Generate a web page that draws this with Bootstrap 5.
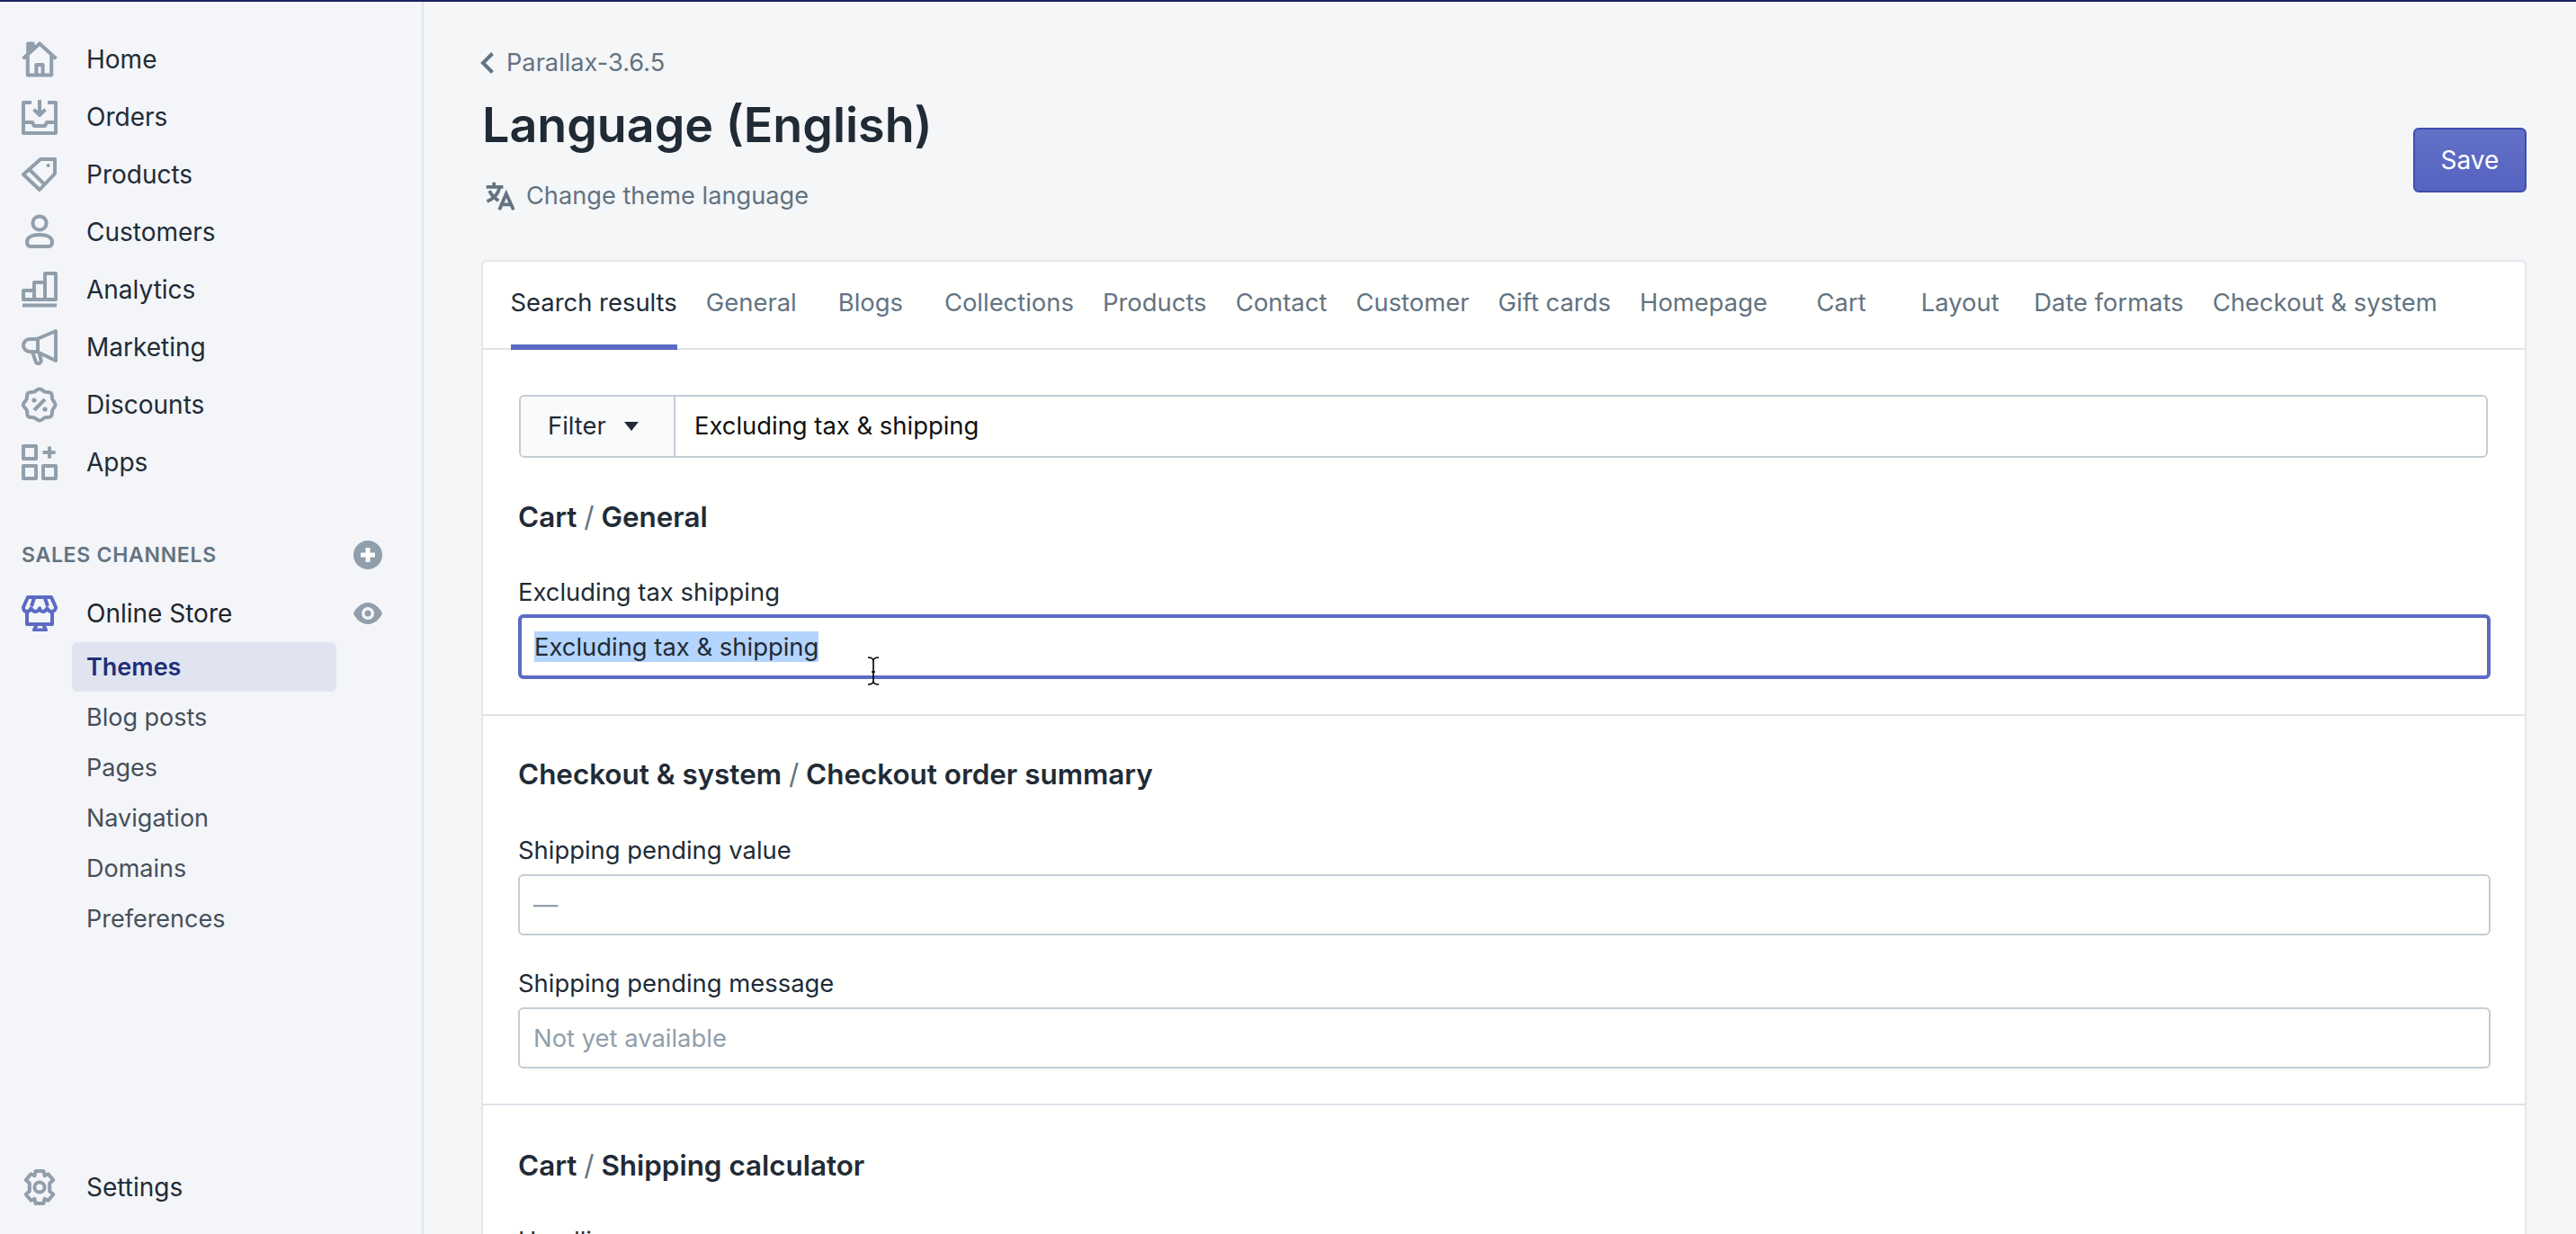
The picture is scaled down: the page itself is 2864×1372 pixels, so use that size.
<!DOCTYPE html>
<html lang="en">
<head>
<meta charset="utf-8">
<title>Language (English)</title>
<link href="https://cdn.jsdelivr.net/npm/bootstrap@5.3.0/dist/css/bootstrap.min.css" rel="stylesheet">
<style>
html,body{height:1372px;overflow:hidden}
body{font-family:"Inter","Liberation Sans",sans-serif;background:#f4f6f8;color:#212b36;font-size:27.4px;letter-spacing:0}
a{text-decoration:none}
.topline{height:2px;background:#1c2260}
.shell{height:1370px;overflow:hidden}
.sidebar{width:471px;flex:none;background:#f3f5f8;border-right:2px solid #e1e4ea;padding:32px 0 20px}
.navrow{flex:none;height:64px;padding-left:24px;color:#212b36;font-size:28px}
.navrow svg.ico{width:40px;height:40px;flex:none;margin-right:32px}
.ico *{fill:none;stroke:#919eab;stroke-width:2;stroke-linejoin:round}
.ico .solid{fill:#919eab;stroke:none}
.storeico *{stroke:#5c6ac4}
.channels{flex:none;height:32px;margin-top:55px;padding:0 44px 0 24px;font-size:23px;font-weight:600;color:#637381;letter-spacing:.72px;line-height:32px}
.rowstore{margin-top:19px;height:60px}
.sideact{width:32px;height:32px;margin-left:auto;margin-right:44px}
.subitem{flex:none;height:56px;margin-left:80px;width:294px;padding-left:16px;color:#454f5b;font-size:27px;line-height:56px;border-radius:6px;display:block}
.subactive{background:#e0e4f0;color:#202e78;font-weight:600;height:55px;line-height:55px;margin-bottom:1px;margin-top:2px}
.pagearea{padding:48px 55px 0 64px;min-width:0}
.crumb{height:40px;color:#637381;font-size:27.2px}
.crumb svg{width:15px;height:24px;margin-right:14px;margin-left:-1px;flex:none}
.pgtitle{font-size:53.8px;font-weight:600;line-height:64px;margin:17px 0 0 1px;color:#212b36}
.langlink{height:40px;margin:27px 0 0 4px;color:#637381;font-size:27.2px}
.langlink svg{width:34px;height:34px;margin-right:12px}
.savebtn{width:126px;height:72px;margin-top:92px;background:linear-gradient(#6371c7,#5563c1);border:2px solid #3f4eae;color:#fff;font-size:28px;border-radius:6px;padding:0;box-shadow:none}
.mainpanel{margin-top:51px;border:2px solid #e3e6ea;border-radius:6px;background:#fffffe;box-shadow:none}
.tabbar{height:98px;padding:25px 0 0 14px;border-bottom:2px solid #dfe3e8;flex-wrap:nowrap}
.tabcell{padding:0 16.06px;color:#637381;text-align:center}
.tabcell:first-child{padding-left:16.5px}
.tabtxt{display:block;min-width:100px;height:73px;line-height:40px;white-space:nowrap;font-size:27.4px}
.tabon{color:#212b36;border-bottom:6px solid #5c6ac4}
.segment{padding:45px 39px 39px;border-bottom:2px solid #dfe3e8}
.firstseg{padding-top:50px}
.filterbox{width:2189px;height:70px;margin-left:1px;border:2px solid #c4cdd5;border-radius:6px;margin-bottom:46px}
.filterbtn{width:172px;background:#f9fafb;border-right:2px solid #c4cdd5;padding-left:30px;color:#212b36;border-radius:6px 0 0 6px}
.filterbtn svg{width:16px;height:10px;margin-left:20px}
.filtertxt{padding-left:21px;color:#111}
.seghead{font-size:31.4px;font-weight:600;line-height:40px;color:#212b36;margin:0}
.seghead i{font-style:normal;font-weight:400;color:#637381}
.fldlabel{line-height:38px;margin-top:44px;margin-bottom:8px;color:#212b36;display:block}
.fldlabel1{margin-top:45px}
.fldlabel2{margin-top:34px}
.fldbox.form-control{height:68px;width:2193px;border:2px solid #c4cdd5;border-radius:6px;padding:0 15px;font-size:27.4px;line-height:64px;color:#919eab;background:#fffffe}
.fldfocus.form-control{height:72px;border:4px solid #5c6ac4;color:#212b36;margin-top:-2px;padding:0 14px}
.picked{background:#b3d4fc;display:inline-block;line-height:34px}
.ibeam{position:absolute;left:964px;top:730px;width:14px;height:32px}
.lastseg{border-bottom:0;padding-top:47px}
</style>
</head>
<body>
<div class="topline"></div>
<div class="shell d-flex">
  <aside class="sidebar d-flex flex-column">
    <a class="navrow d-flex align-items-center"><svg class="ico" viewBox="0 0 20 20"><path d="M.8 9.600 10 1.200l9.200 8.400M3.400 7.500V18.800h13.200V7.500M3.600 7V1.300h3.600M3.600 4.800 7 1.500M8.200 18.800V13h3.600v5.800"/></svg>Home</a>
    <a class="navrow d-flex align-items-center"><svg class="ico" viewBox="0 0 20 20"><path d="M5.500 2H1v17h18V2h-4.500M1 13h5l1 2h6l1-2h5M10 .5V8.500M6.800 5.800 10 9l3.200-3.200"/></svg>Orders</a>
    <a class="navrow d-flex align-items-center"><svg class="ico" viewBox="0 0 20 20"><path d="M10.500 1.500H18.500V9.500L10 18.500 1 10ZM4.600 7.500 12.800 15.600"/><circle class="solid" cx="14.800" cy="5" r="1"/></svg>Products</a>
    <a class="navrow d-flex align-items-center"><svg class="ico" viewBox="0 0 20 20"><circle cx="10" cy="5" r="3.800"/><path d="M3 15.500C3 12.800 6 11.500 10 11.500s7 1.300 7 4c0 1.700-.8 2.500-2 2.500H5c-1.200 0-2-.8-2-2.500Z"/></svg>Customers</a>
    <a class="navrow d-flex align-items-center"><svg class="ico" viewBox="0 0 20 20"><path d="M1 15.500V10.500H7V15.500ZM7 15.500V6H13V15.500ZM13 15.500V1H19V15.500ZM.5 18.700H19.500"/></svg>Analytics</a>
    <a class="navrow d-flex align-items-center"><svg class="ico" viewBox="0 0 20 20"><path d="M19 1 8.500 5.500H4.500a3.500 3.500 0 0 0 0 7H8.500L19 17.500ZM9 5.500V12.500M6 12.500 7.800 17.800a1.500 1.500 0 0 0 3-.5L9.800 13"/></svg>Marketing</a>
    <a class="navrow d-flex align-items-center"><svg class="ico" viewBox="0 0 20 20"><path d="M10 1.200c1.300 0 2 1.300 3 1.600 1.200.3 2.600-.1 3.400.8.800.9.300 2.200.7 3.300.3 1 1.700 1.800 1.700 3.100s-1.300 2-1.700 3.100c-.3 1.100.1 2.400-.7 3.300-.9.900-2.200.4-3.400.8-1.100.3-1.800 1.600-3 1.600s-2-1.300-3-1.600c-1.200-.3-2.600.1-3.400-.8-.8-.9-.3-2.200-.7-3.300C2.500 12 .9 11.300.9 10s1.600-2 1.900-3.100c.4-1.100-.1-2.400.7-3.300.9-.9 2.200-.5 3.500-.8 1-.3 1.700-1.600 3-1.600Z"/><path d="M7 13l6-6"/><circle class="solid" cx="7" cy="7.500" r="1.300"/><circle class="solid" cx="13" cy="12.500" r="1.300"/></svg>Discounts</a>
    <a class="navrow d-flex align-items-center"><svg class="ico" viewBox="0 0 20 20"><path d="M1 1H8V8H1ZM1 12H8V19H1ZM12 12H19V19H12ZM15.500 1.200V7.800M11.800 4.500H18.800"/></svg>Apps</a>

    <div class="channels d-flex justify-content-between align-items-center"><span>SALES CHANNELS</span><svg width="32" height="32" viewBox="0 0 32 32"><circle cx="16" cy="16" r="16" fill="#919eab"/><path d="M16 8v16M8 16h16" stroke="#fff" stroke-width="5"/></svg></div>
    <a class="navrow rowstore d-flex align-items-center text-dark"><svg class="ico storeico" viewBox="0 0 20 20"><path d="M3.500 1h13l2.500 5.500c0 1.700-1.300 2.500-2.400 2.500-1.200 0-2-1-2.400-1.800-.4.800-1.300 1.800-2.400 1.800S10.300 8 10 7.200C9.700 8 8.800 9 7.700 9S5.700 8 5.300 7.200C4.900 8 4.100 9 2.900 9 1.700 9 1 8 1 6.500Z"/><path d="M7 1.500 5.500 6M13 1.500l1.500 4.500M3 9v7H17V9M7 19.200h6.500L12 16H8.500Z"/></svg>Online Store<svg class="sideact" viewBox="0 0 32 32"><path fill="#919eab" fill-rule="evenodd" d="M16 4C8 4 2 11 0 16c2 5 8 12 16 12s14-7 16-12C30 11 24 4 16 4Zm0 5a7 7 0 1 1 0 14 7 7 0 0 1 0-14Zm0 3.500a3.500 3.500 0 1 0 0 7 3.500 3.500 0 0 0 0-7Z"/></svg></a>
    <a class="subitem subactive">Themes</a>
    <a class="subitem">Blog posts</a>
    <a class="subitem">Pages</a>
    <a class="subitem">Navigation</a>
    <a class="subitem">Domains</a>
    <a class="subitem">Preferences</a>
    <a class="navrow d-flex align-items-center mt-auto"><svg class="ico" viewBox="0 0 20 20"><path d="M7.800 1h4.400l.6 2.600 2-1 2.800 3.400-2 1.800v4.400l2 1.800-2.800 3.400-2-1-.6 2.600H7.800l-.6-2.600-2 1L2.400 14l2-1.800V7.800L2.400 6l2.800-3.400 2 1Z"/><circle cx="10" cy="10" r="2.800"/></svg>Settings</a>
  </aside>

  <main class="pagearea flex-grow-1">
    <div class="d-flex justify-content-between align-items-start">
      <div>
        <a class="crumb d-flex align-items-center"><svg viewBox="0 0 15 24"><path d="M13.500 1.500 3 12l10.500 10.500" fill="none" stroke="#637381" stroke-width="4"/></svg>Parallax-3.6.5</a>
        <h1 class="pgtitle">Language (English)</h1>
        <div class="langlink d-flex align-items-center"><svg viewBox="0 0 20 20" fill="none" stroke="#637381" stroke-width="2.200"><path d="M1 4h11M6 1v3M9.800 4C9 8 6 11.500 1.500 13.500M3 6.500C4.500 9.500 6.500 11.500 9 13"/><path d="M9.500 19 14 8.500 18.800 19M11 15.500h6.500"/></svg>Change theme language</div>
      </div>
      <button class="btn savebtn" type="button">Save</button>
    </div>

    <section class="card mainpanel">
      <div class="nav tabbar">
        <a class="tabcell"><span class="tabtxt tabon">Search results</span></a>
        <a class="tabcell"><span class="tabtxt">General</span></a>
        <a class="tabcell"><span class="tabtxt">Blogs</span></a>
        <a class="tabcell"><span class="tabtxt">Collections</span></a>
        <a class="tabcell"><span class="tabtxt">Products</span></a>
        <a class="tabcell"><span class="tabtxt">Contact</span></a>
        <a class="tabcell"><span class="tabtxt">Customer</span></a>
        <a class="tabcell"><span class="tabtxt">Gift cards</span></a>
        <a class="tabcell"><span class="tabtxt">Homepage</span></a>
        <a class="tabcell"><span class="tabtxt">Cart</span></a>
        <a class="tabcell"><span class="tabtxt">Layout</span></a>
        <a class="tabcell"><span class="tabtxt">Date formats</span></a>
        <a class="tabcell"><span class="tabtxt">Checkout &amp; system</span></a>
      </div>
      <div class="segment firstseg">
        <div class="filterbox d-flex">
          <div class="filterbtn d-flex align-items-center">Filter<svg viewBox="0 0 16 10"><path d="M0 0h16L8 10z" fill="#212b36"/></svg></div>
          <div class="filtertxt d-flex align-items-center">Excluding tax &amp; shipping</div>
        </div>
        <h2 class="seghead">Cart <i>/</i> General</h2>
        <label class="fldlabel">Excluding tax shipping</label>
        <div class="form-control fldbox fldfocus"><span class="picked">Excluding tax &amp; shipping</span></div>
      </div>
      <div class="segment">
        <h2 class="seghead">Checkout &amp; system <i>/</i> Checkout order summary</h2>
        <label class="fldlabel fldlabel1">Shipping pending value</label>
        <div class="form-control fldbox">—</div>
        <label class="fldlabel fldlabel2">Shipping pending message</label>
        <div class="form-control fldbox">Not yet available</div>
      </div>
      <div class="segment lastseg">
        <h2 class="seghead">Cart <i>/</i> Shipping calculator</h2>
        <label class="fldlabel">Handling</label>
      </div>
    </section>
  </main>
</div>
<svg class="ibeam" viewBox="0 0 14 32" fill="none" stroke="#000" stroke-width="1.600"><path d="M1 1c3 0 6 1 6 4v22c0 3-3 4-6 4M13 1c-3 0-6 1-6 4v22c0 3 3 4 6 4M5 17h4"/></svg>
<script src="https://cdn.jsdelivr.net/npm/bootstrap@5.3.0/dist/js/bootstrap.bundle.min.js"></script>
</body>
</html>
